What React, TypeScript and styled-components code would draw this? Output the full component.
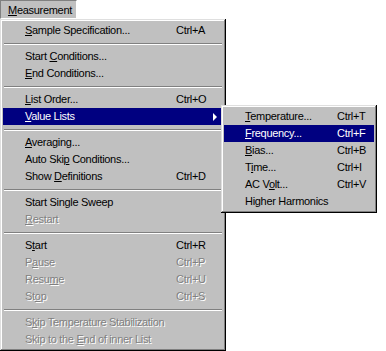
import React from "react";
import styled, { createGlobalStyle } from "styled-components";

const GlobalStyle = createGlobalStyle`
  html, body {
    margin: 0;
    padding: 0;
    background: #ffffff;
  }
  body {
    font-family: "Liberation Sans", Arial, sans-serif;
    font-size: 11px;
    letter-spacing: -0.3px;
    -webkit-font-smoothing: none;
  }
`;

type Entry =
  | { sep: true }
  | {
      sep?: false;
      label: string;
      mn?: number;
      key?: string;
      disabled?: boolean;
      active?: boolean;
      sub?: boolean;
    };

const mainItems: Entry[] = [
  { label: "Sample Specification...", mn: 0, key: "Ctrl+A" },
  { sep: true },
  { label: "Start Conditions...", mn: 6 },
  { label: "End Conditions...", mn: 0 },
  { sep: true },
  { label: "List Order...", mn: 0, key: "Ctrl+O" },
  { label: "Value Lists", mn: 0, active: true, sub: true },
  { sep: true },
  { label: "Averaging...", mn: 0 },
  { label: "Auto Skip Conditions...", mn: 8 },
  { label: "Show Definitions", mn: 5, key: "Ctrl+D" },
  { sep: true },
  { label: "Start Single Sweep", mn: 9 },
  { label: "Restart", mn: 0, disabled: true },
  { sep: true },
  { label: "Start", mn: 1, key: "Ctrl+R" },
  { label: "Pause", mn: 1, key: "Ctrl+P", disabled: true },
  { label: "Resume", mn: 4, key: "Ctrl+U", disabled: true },
  { label: "Stop", mn: 2, key: "Ctrl+S", disabled: true },
  { sep: true },
  { label: "Skip Temperature Stabilization", mn: 1, disabled: true },
  { label: "Skip to the End of inner List", mn: 12, disabled: true },
];

const subItems: Entry[] = [
  { label: "Temperature...", mn: 0, key: "Ctrl+T" },
  { label: "Frequency...", mn: 0, key: "Ctrl+F", active: true },
  { label: "Bias...", mn: 0, key: "Ctrl+B" },
  { label: "Time...", mn: 1, key: "Ctrl+I" },
  { label: "AC Volt...", mn: 4, key: "Ctrl+V" },
  { label: "Higher Harmonics" },
];

const Page = styled.div`
  position: relative;
  width: 386px;
  height: 351px;
  overflow: hidden;
  color: #000;
`;

const MenuBar = styled.div`
  display: flex;
  height: 19px;
`;

const BarTitle = styled.div`
  box-sizing: border-box;
  width: 77px;
  height: 19px;
  padding: 2px 0 0 7px;
  background: #c0c0c0;
  border-top: 1px solid #808080;
  border-left: 1px solid #808080;
  border-right: 1px solid #ffffff;
  border-bottom: 1px solid #ffffff;
  line-height: 14px;
`;

const Panel = styled.div<{ $w: number }>`
  box-sizing: border-box;
  width: ${(p) => p.$w}px;
  padding: 3px;
  background: #c0c0c0;
  box-shadow: inset -1px -1px #000000, inset 1px 1px #dfdfdf,
    inset -2px -2px #808080, inset 2px 2px #ffffff;
`;

const DropDown = styled(Panel)`
  position: absolute;
  top: 19px;
  left: 0;
`;

const SubMenu = styled(Panel)`
  position: absolute;
  top: -3px;
  left: calc(100% - 2px);
  z-index: 2;
`;

const Row = styled.div<{ $active?: boolean; $disabled?: boolean; $cols: string; $pad: number }>`
  position: relative;
  display: grid;
  grid-template-columns: ${(p) => p.$cols};
  align-items: center;
  height: 17px;
  padding-left: ${(p) => p.$pad}px;
  line-height: 17px;
  white-space: nowrap;
  background: ${(p) => (p.$active ? "#000080" : "transparent")};
  color: ${(p) => (p.$active ? "#ffffff" : p.$disabled ? "#808080" : "#000000")};
  text-shadow: ${(p) => (p.$disabled ? "1px 1px 0 #ffffff" : "none")};
`;

const Sep = styled.div`
  height: 9px;
  display: flex;
  align-items: center;
  padding: 0 1px;
  &::before {
    content: "";
    flex: 1;
    height: 0;
    border-top: 1px solid #808080;
    border-bottom: 1px solid #ffffff;
  }
`;

const Arrow = styled.span<{ $active?: boolean }>`
  position: absolute;
  right: 6px;
  top: 5px;
  width: 0;
  height: 0;
  border-top: 4px solid transparent;
  border-bottom: 4px solid transparent;
  border-left: 4px solid ${(p) => (p.$active ? "#ffffff" : "#000000")};
`;

const U = styled.span`
  text-decoration: underline;
  text-underline-offset: 1px;
`;

const Mnemonic: React.FC<{ text: string; at?: number }> = ({ text, at }) =>
  at === undefined ? (
    <span>{text}</span>
  ) : (
    <span>
      {text.slice(0, at)}
      <U>{text[at]}</U>
      {text.slice(at + 1)}
    </span>
  );

const MenuList: React.FC<{ items: Entry[]; cols: string; pad: number }> = ({ items, cols, pad }) => (
  <>
    {items.map((it, i) =>
      it.sep ? (
        <Sep key={i} />
      ) : (
        <Row key={i} $active={it.active} $disabled={it.disabled} $cols={cols} $pad={pad}>
          <Mnemonic text={it.label} at={it.mn} />
          <span>{it.key}</span>
          {it.sub && (
            <>
              <Arrow $active={it.active} />
              <SubMenu $w={156}>
                <MenuList items={subItems} cols="92px 1fr" pad={21} />
              </SubMenu>
            </>
          )}
        </Row>
      )
    )}
  </>
);

export default function App() {
  return (
    <Page>
      <GlobalStyle />
      <MenuBar>
        <BarTitle>
          <Mnemonic text="Measurement" at={0} />
        </BarTitle>
      </MenuBar>
      <DropDown $w={226}>
        <MenuList items={mainItems} cols="151px 1fr" pad={22} />
      </DropDown>
    </Page>
  );
}
